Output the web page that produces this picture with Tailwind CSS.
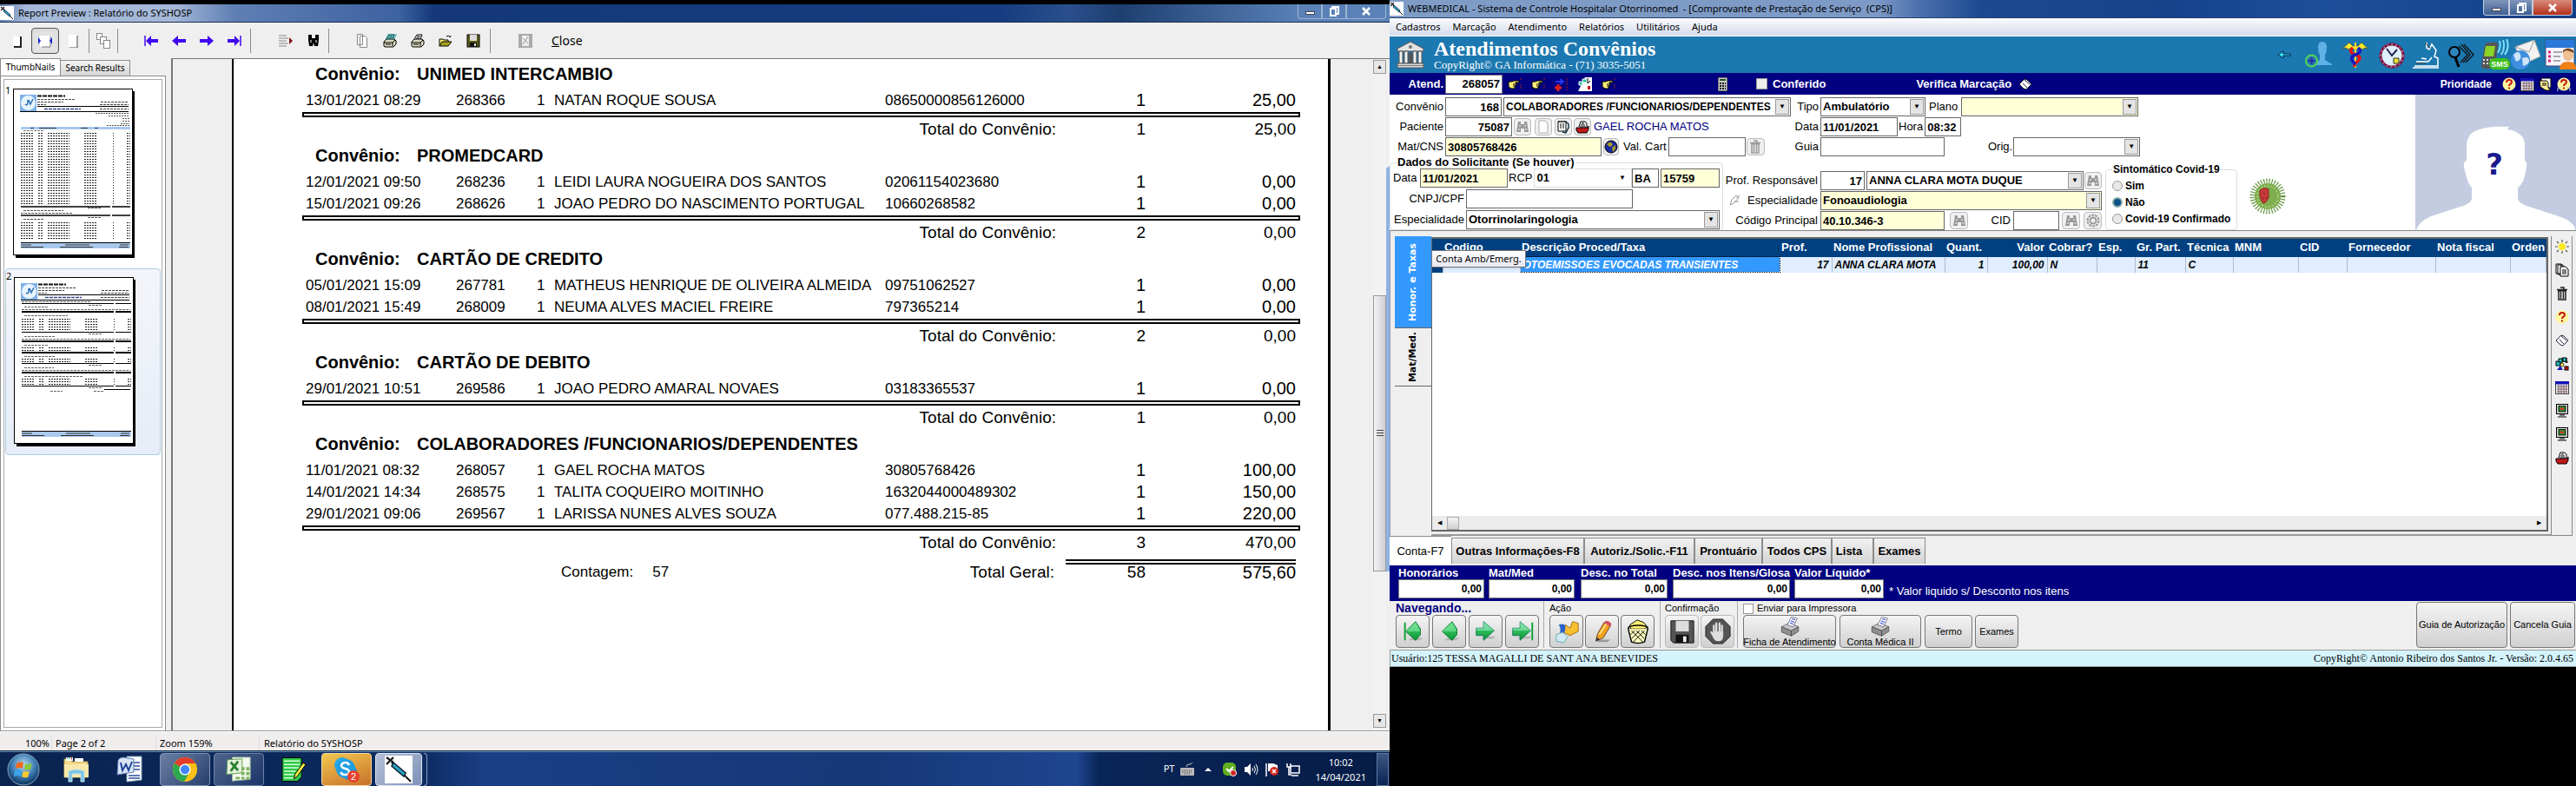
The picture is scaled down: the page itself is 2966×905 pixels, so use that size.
<!DOCTYPE html>
<html lang="pt-BR">
<head>
<meta charset="utf-8">
<title>SYSHOSP / WEBMEDICAL</title>
<script src="https://cdn.jsdelivr.net/npm/@tailwindcss/browser@4"></script>
</head>
<body class="bg-black font-['Liberation_Sans',Arial,sans-serif] text-black">
<svg width="0" height="0" class="absolute" aria-hidden="true">
  <defs>
    <linearGradient id="gGreen" x1="0" y1="0" x2="0" y2="1"><stop offset="0" stop-color="#5be08a"/><stop offset="1" stop-color="#05952d"/></linearGradient>
    <radialGradient id="gOrb" cx=".5" cy=".35" r=".6"><stop offset="0" stop-color="#b9dcf2"/><stop offset=".6" stop-color="#3f7fb4"/><stop offset="1" stop-color="#133d6c"/></radialGradient>
    <pattern id="rowsA" width="126" height="3" patternUnits="userSpaceOnUse"><path d="M0 1.500H15M20 1.500H26M31 1.500H56M73 1.500H88M106 1.500H107M122 1.500H126" stroke="#222" stroke-width="1" stroke-dasharray="2 1"/></pattern>
    <symbol id="syringe" viewBox="0 0 16 16"><rect width="16" height="16" fill="#fff"/><path d="M1 1l4 3M1 5l4-4M4 4l8 8" stroke="#222" stroke-width="1.2"/><path d="M5 4l7 6-1 2-7-6z" fill="#2aa7c9" stroke="#123" stroke-width=".8"/><path d="M12 12l3 3" stroke="#111"/></symbol>
    <symbol id="bino" viewBox="0 0 16 16"><path d="M3 2h3v3h4V2h3l2 12h-5v-4H6v4H1z" fill="currentColor"/><path d="M5 6v2M11 6v2M4 10v2M12 10v2" stroke="#fff"/></symbol>
    <symbol id="printer" viewBox="0 0 16 16"><path d="M4 6l3-5h6l-2 5" fill="#fff" stroke="#000"/><path d="M1 9l3-3h9l2 2v4l-3 3H2l-1-1z" fill="#d8d8c0" stroke="#000"/><path d="M1 10h10l3-3M11 10v4M3 12h6M7 3h4M6 5h4" stroke="#000" fill="none"/></symbol>
    <symbol id="printred" viewBox="0 0 16 16"><path d="M4 8l2-6h5l2 2v5" fill="#fff" stroke="#000"/><path d="M1 9h13l1-2v4l-2 4H3l-2-3z" fill="#c01818" stroke="#000"/><path d="M7 4h3M6 6h5M5 8h7" stroke="#000"/></symbol>
    <symbol id="help" viewBox="0 0 16 16"><circle cx="8" cy="8" r="7.5" fill="#fff59a"/><path d="M5 6q0-3 3-3t3 2.500q0 1.500-2 2.500-1 .8-1 2" stroke="#c01818" stroke-width="2" fill="none"/><rect x="7" y="11.500" width="2" height="2" fill="#c01818"/></symbol>
    <symbol id="cal" viewBox="0 0 16 16"><rect x=".5" y="1.500" width="15" height="14" fill="#eee" stroke="#444"/><rect y="1" width="16" height="3.500" fill="#1414b4"/><path d="M2 7h12M2 10h12M2 13h12M4 5v10M7 5v10M10 5v10M13 5v10" stroke="#7a5a66"/></symbol>
    <symbol id="book" viewBox="0 0 16 16"><path d="M1 8l6-6 3 1 5 5-6 6-3-1z" fill="#fff" stroke="currentColor"/><path d="M5 7l5 5M7 3l6 5" stroke="currentColor" fill="none"/></symbol>
    <symbol id="hand" viewBox="0 0 16 16"><path d="M1 5h4l2-1h6v2H9v1h1v2H9v2H8v2H4L1 11z" fill="#ffee7a" stroke="#000"/><path d="M6 8h3M6 10h3" stroke="#000"/><path d="M15 1v3M15 8v5" stroke="#a02020" stroke-dasharray="2 1"/></symbol>
    <symbol id="pc" viewBox="0 0 16 16"><rect x="1.500" y=".5" width="13" height="11" fill="#ddd" stroke="#000"/><rect x="4" y="2.500" width="8" height="6.500" fill="#2a8a2a" stroke="#000" stroke-width=".8"/><rect x="6" y="4.500" width="4" height="2.500" fill="#d33"/><path d="M5 13h6M3 15h10" stroke="#000"/></symbol>
    <symbol id="trash" viewBox="0 0 16 16"><path d="M6 1h4v2M2 3.500h12M3 5h10M4 5v10h8V5M6.500 6v8M9.500 6v8" stroke="currentColor" stroke-width="1.500" fill="none"/></symbol>
    <symbol id="docs" viewBox="0 0 16 16"><path d="M1 1h6v11H1zM3 2h6v11H3z" fill="#fff" stroke="#000"/><path d="M6 4h6l3 3v8H6z" fill="#fff" stroke="#000"/><path d="M8 8h5M8 10h5M8 12h5" stroke="#000"/></symbol>
    <symbol id="shapes" viewBox="0 0 16 16"><path d="M1 5h5v5H1z" fill="#29c4c4" stroke="#000"/><path d="M4 2h5v4H4zM8 1h5v4H8z" fill="#29c4c4" stroke="#000"/><path d="M13 1v6l2-2M13 7l-2-2" stroke="#000" fill="none"/><circle cx="8" cy="9" r="2" fill="#fe5" stroke="#000" stroke-width=".7"/><path d="M2 15l4-5 3 5z" fill="#1616b0"/><rect x="11" y="11" width="4" height="4" fill="#c11" stroke="#000"/></symbol>
    <symbol id="bigprint" viewBox="0 0 32 32"><path d="M3 17l12-6 14 6-11 6z" fill="#c8c8c8" stroke="#555"/><path d="M3 17v8l15 6v-8zM29 17v7l-11 7v-8z" fill="#8f8f8f" stroke="#444"/><path d="M12 14l6-12 9 2-6 13z" fill="#fff" stroke="#557"/><path d="M17 8l6 2M16 11l5 2M19 5l5 1" stroke="#3344cc" stroke-width="1.500"/></symbol>
    <symbol id="navprev" viewBox="0 0 32 32"><path d="M14 24h14l-4 3H10z" fill="#999" opacity=".6"/><path d="M7 16L19 4l6 9v7l-6 7z" fill="url(#gGreen)" stroke="#07702a"/><path d="M7 16h18L19 5z" fill="#8cf0a8" opacity=".5"/></symbol>
    <symbol id="navnext" viewBox="0 0 32 32"><path d="M10 25h14l4-3H12z" fill="#999" opacity=".6"/><path d="M4 12h9V4l13 11-13 12v-6H4z" fill="url(#gGreen)" stroke="#0b7a55"/><path d="M4 12h9V4l13 11H4z" fill="#a6efcf" opacity=".5"/></symbol>
    <symbol id="thumbhead" viewBox="0 0 136 38"><rect x="8" y="7" width="19" height="19" fill="#7fb0e8"/><circle cx="17.500" cy="16.500" r="8.500" fill="#e8f4fb"/><path d="M14 18q2 2 3-1v-4M18 13l2 5 3-6" stroke="#2b6fb8" stroke-width="1.500" fill="none"/><path d="M28 8.500h32" stroke="#111" stroke-width="2" stroke-dasharray="5 1"/><path d="M28 12.500h43M28 15.500h30M28 18.500h10M101 15.500h32M100 18.500h33M100 23.500h33" stroke="#444" stroke-dasharray="3 1"/><path d="M28 20.500h105M8 26.500h125" stroke="#000"/><path d="M36 23.500h42" stroke="#334a90" stroke-width="1.500" stroke-dasharray="4 1"/></symbol>
  </defs>
</svg>

<div class="grid min-h-screen grid-cols-[800fr_683fr]">

<!-- Report preview window with taskbar -->
<section class="flex min-h-screen flex-col bg-[#efefef] pt-[5px] shadow-[inset_0_5px_0_#000]">
  <header class="flex h-[21px] items-center border-b border-[#1d2f50] bg-[linear-gradient(90deg,#6683b4_0,#a4b8d8_30px,#a4b8d8_200px,#5f7fb4_270px,#3d62a0_460px,#14387a_500px,#153c80_1150px,#2a4f8c_1230px,#1d3f70_1290px,#5a82b8_1500px)] font-['Noto_Sans',sans-serif] text-[11px]">
    <svg class="h-4 w-4"><use href="#syringe"/></svg>
    <h1 class="ml-[5px] flex-1">Report Preview : Relatório do SYSHOSP</h1>
    <div class="mr-1 flex h-full w-[102px] pb-[3px] text-white [&_button]:flex [&_button]:items-center [&_button]:justify-center [&_button]:border [&_button]:border-t-0 [&_button]:border-[#9fb4d2]">
      <button aria-label="Minimizar" class="w-7 rounded-bl"><span class="mt-1 h-1 w-[11px] border border-[#445] bg-white"></span></button>
      <button aria-label="Restaurar" class="w-7 border-l-0"><svg class="h-3 w-3" viewBox="0 0 12 12" fill="none"><path d="M4 3V1h7v8H9" stroke="#fff" stroke-width="2"/><rect x="2" y="3" width="6" height="8" stroke="#fff" stroke-width="2"/></svg></button>
      <button aria-label="Fechar" class="flex-1 rounded-br border-l-0"><svg class="h-2.5 w-2.5" viewBox="0 0 10 10"><path d="M1 1l8 8M9 1L1 9" stroke="#fff" stroke-width="2.500"/></svg></button>
    </div>
  </header>

  <nav class="flex h-[41px] items-center pl-1 [&_button]:flex [&_button]:h-[30px] [&_button]:w-8 [&_button]:items-center [&_button]:justify-center [&>i]:h-7 [&>i]:w-px [&>i]:bg-[#8c8c8c]">
    <button aria-label="Página inteira"><svg class="h-4 w-4" viewBox="0 0 16 16"><rect x="3" y="3" width="8" height="11" fill="#fff"/><path d="M12 3v12H4" stroke="#222" stroke-width="2" fill="none"/></svg></button>
    <button aria-label="Largura da página" class="rounded border border-[#555] bg-[#e2e2e2] shadow-inner"><svg class="h-4 w-4" viewBox="0 0 16 16"><rect x="2" y="2" width="12" height="13" fill="#fff"/><path d="M14 3v12H4" stroke="#777" fill="none"/><path d="M0 4l3 4-3 4zM16 4l-3 4 3 4z" fill="#1428d8"/></svg></button>
    <button aria-label="100%"><svg class="h-4 w-4" viewBox="0 0 16 16"><rect x="3" y="1" width="9" height="14" fill="#fff"/><path d="M13 2v14H4" stroke="#555" fill="none"/></svg></button>
    <i class="ml-0.5"></i>
    <button aria-label="Várias páginas"><svg class="h-[18px] w-[18px]" viewBox="0 0 18 18" fill="#fff" stroke="#888"><rect x="1.500" y=".5" width="6" height="7"/><rect x="5.500" y="4.500" width="7" height="8"/><rect x="9.500" y="8.500" width="7" height="9"/></svg></button>
    <i></i>
    <button aria-label="Primeira página" class="ml-[22px]"><svg class="h-4 w-4" viewBox="0 0 16 16"><path d="M1 2v12" stroke="#4008f0" stroke-width="1.500"/><path d="M2 8l6-6v4h8v4H8v4z" fill="#4008f0"/></svg></button>
    <button aria-label="Página anterior"><svg class="h-4 w-4" viewBox="0 0 16 16"><path d="M0 8l7-6v4h9v4H7v4z" fill="#4008f0"/></svg></button>
    <button aria-label="Próxima página"><svg class="h-4 w-4" viewBox="0 0 16 16"><path d="M16 8L9 2v4H0v4h9v4z" fill="#4008f0"/></svg></button>
    <button aria-label="Última página"><svg class="h-4 w-4" viewBox="0 0 16 16"><path d="M15 2v12" stroke="#4008f0" stroke-width="1.500"/><path d="M14 8L8 2v4H0v4h8v4z" fill="#4008f0"/></svg></button>
    <i class="ml-0.5"></i>
    <button aria-label="Ir para página" class="ml-6"><svg class="h-4 w-4" viewBox="0 0 16 16"><path d="M0 2h9M0 5h11M0 8h9M0 11h11M0 14h9" stroke="#888"/><path d="M12 4l4 4-4 4z" fill="#801010"/></svg></button>
    <button aria-label="Procurar"><svg class="h-4 w-4" viewBox="0 0 16 16"><path d="M2 1h4v4h4V1h4v6l-1 7H9l-1-4-1 4H3L2 7z" fill="#000"/><path d="M5 7v3M11 7v3" stroke="#fff"/></svg></button>
    <i class="ml-px"></i>
    <button aria-label="Copiar" class="ml-[22px]"><svg class="h-4 w-4" viewBox="0 0 16 16" fill="#fff" stroke="#888"><path d="M2.500.5h6v12h-6zM5.500 2.500h6l2 2v11h-8z"/></svg></button>
    <button aria-label="Configurar impressora"><svg class="h-4 w-4"><use href="#printer"/><path d="M5 1h11M4 3h11M3 5h11" stroke="#10a0a0"/></svg></button>
    <button aria-label="Imprimir"><svg class="h-4 w-4"><use href="#printer"/></svg></button>
    <button aria-label="Abrir"><svg class="h-4 w-4" viewBox="0 0 16 16"><path d="M1 14V6h4l1 1h5v2" fill="#ffef70" stroke="#000"/><path d="M1 14l3-5h11l-4 5z" fill="#a8a020" stroke="#000"/><path d="M9 3q3-2 4 1l1-2" stroke="#000" fill="none"/></svg></button>
    <button aria-label="Salvar"><svg class="h-4 w-4" viewBox="0 0 16 16"><rect x="1" y="1" width="14" height="14" fill="#5c5c14" stroke="#000"/><rect x="4" y="1" width="8" height="7" fill="#ddd"/><rect x="4" y="10" width="8" height="5" fill="#111"/><rect x="9" y="11" width="2" height="3" fill="#ddd"/></svg></button>
    <i class="ml-[3px]"></i>
    <button aria-label="Cancelar" class="ml-6"><svg class="h-4 w-4" viewBox="0 0 16 16"><rect width="16" height="16" fill="#aaa"/><rect x="4" y="2" width="8" height="12" fill="#eee"/><path d="M5 12l6-9M5 5l6 6" stroke="#999"/></svg></button>
    <button class="ml-[14px] font-['Noto_Sans',sans-serif] text-sm !w-auto"><span><u>C</u>lose</span></button>
  </nav>

  <div class="flex flex-1">
    <aside class="flex w-[191px] flex-col font-['Noto_Sans',sans-serif] text-[11px]">
      <div class="flex items-end" role="tablist">
        <button role="tab" aria-selected="true" class="h-5 w-[70px] border border-b-0 border-[#8c8c8c] bg-white text-[10px]">ThumbNails</button>
        <button role="tab" aria-selected="false" class="h-[18px] w-20 border border-b-0 border-l-0 border-[#8c8c8c] bg-[linear-gradient(#f3f3f3,#d6d6d6)] text-[10px]">Search Results</button>
      </div>
      <div class="flex-1 border border-[#8c8c8c] bg-white p-[3px]">
        <div class="h-full border border-[#aaa] px-px pt-1">
          <figure class="flex items-start pb-3">
            <figcaption class="w-[9px] leading-4">1</figcaption>
            <svg class="mt-[6px] h-[195px] w-[142px] -mr-2" viewBox="0 0 142 195"><rect x="3" y="3" width="137" height="192" fill="#000"/><rect x=".5" y=".5" width="137" height="191" fill="#fff" stroke="#000"/><use href="#thumbhead" width="136" height="38"/>
              <path d="M95 28.500h38M110 31.500h23M126 34.500h8M126 37.500h8M124 40.500h10M108 42.500h26" stroke="#555" stroke-dasharray="2 1"/>
              <rect x="9" y="44" width="126" height="3" fill="#a8c8ec"/><path d="M20 45.500h4M30 45.500h20M78 45.500h8M94 45.500h4" stroke="#345"/>
              <path d="M12 48.500h24" stroke="#777" stroke-dasharray="3 1"/>
              <g transform="translate(9 50)"><rect width="126" height="85" fill="url(#rowsA)"/></g>
              <path d="M9 136h103M114 136h21M9 146h103M114 146h21" stroke="#000" stroke-width="1.500"/><path d="M12 140.500h46M9 143.500h60M86 137.500h16M86 148.500h16M12 150.500h24" stroke="#555" stroke-dasharray="3 1"/>
              <g transform="translate(9 153)"><rect width="126" height="21" fill="url(#rowsA)"/></g>
              <path d="M9 177.500h126" stroke="#000"/><rect x="9" y="178" width="126" height="6" fill="#a8c8ec"/><path d="M9 180h12M60 180h28M123 180h10M9 182.500h26M54 182.500h38M122 182.500h11" stroke="#333"/></svg>
          </figure>
          <figure class="flex items-start rounded-sm border border-[#a9cbe2] bg-[linear-gradient(#f4f5fa,#e6edf7)] pb-2">
            <figcaption class="w-[9px] leading-4">2</figcaption>
            <svg class="mt-[9px] h-[196px] w-[142px]" viewBox="0 0 142 196"><rect x="3" y="3" width="137" height="192" fill="#000"/><rect x=".5" y=".5" width="137" height="191" fill="#fff" stroke="#000"/><use href="#thumbhead" width="136" height="38"/>
              <path d="M9 30.500h106M117 30.500h18M9 63.500h106M117 63.500h18M9 99.500h106M117 99.500h18M9 125.500h106M117 125.500h18" stroke="#000"/>
              <path d="M9 40h106M117 40h18M9 74h106M117 74h18M9 87h106M117 87h18M9 110h106M117 110h18" stroke="#000" stroke-width="2"/>
              <path d="M9 28.500h80M12 34.500h28M9 37.500h125M12 44.500h50M12 68.500h36M9 71.500h125M12 78.500h28M12 91.500h36M12 104.500h34M9 107.500h125M12 114.500h68M86 32.500h16M86 65.500h16M86 101.500h16M86 127.500h16M42 131.500h14M92 131.500h12" stroke="#666" stroke-dasharray="3 1"/>
              <g transform="translate(9 47)"><rect width="126" height="15" fill="url(#rowsA)"/></g><g transform="translate(9 80)"><rect width="126" height="6" fill="url(#rowsA)"/></g><g transform="translate(9 93)"><rect width="126" height="6" fill="url(#rowsA)"/></g><g transform="translate(9 116)"><rect width="126" height="9" fill="url(#rowsA)"/></g>
              <path d="M104 129.500h30M9 177.500h126" stroke="#000"/><rect x="9" y="178" width="126" height="6" fill="#a8c8ec"/><path d="M9 180h12M60 180h28M123 180h10M9 182.500h26M54 182.500h38M122 182.500h11" stroke="#333"/></svg>
          </figure>
        </div>
      </div>
    </aside>

    <div class="ml-1.5 flex flex-1 border-l-2 border-t border-[#777]">
      <div class="ml-[68px] flex-1 border-l-2 border-r-[3px] border-black bg-white pl-[79px] pr-8 leading-[25px]">
        <table class="w-full table-fixed border-collapse text-[17px] [&_td]:p-0 [&_th]:p-0 [&_td]:whitespace-nowrap [&_td:nth-child(n+6)]:text-[20px] [&_.h]:text-left [&_.h]:text-[20px] [&_.h]:leading-[35px] [&_.h_span]:inline-block [&_.h_span]:w-[117px] [&_tr>td:nth-last-child(-n+2)]:text-right [&_.t]:leading-[26px] [&_.t_td]:text-[19px]">
          <colgroup><col class="w-[177px]"><col class="w-[93px]"><col class="w-5"><col><col class="w-[200px]"><col class="w-[100px]"><col class="w-[178px]"></colgroup>
          <tbody>
            <tr><th colspan="7" class="h"><span class="ml-[15px]">Convênio:</span>UNIMED INTERCAMBIO</th></tr>
            <tr><td class="pl-1!">13/01/2021 08:29</td><td>268366</td><td>1</td><td>NATAN ROQUE SOUSA</td><td>08650000856126000</td><td>1</td><td class="pr-[5px]!">25,00</td></tr>
            <tr><th colspan="7"><div class="mb-px mt-px h-1.5 border-2"></div></th></tr>
            <tr class="t"><td colspan="5" class="pr-[3px]! text-right">Total do Convênio:</td><td>1</td><td class="pr-[5px]!">25,00</td></tr>
          </tbody>
          <tbody>
            <tr><th colspan="7" class="h"><span class="ml-[15px]">Convênio:</span>PROMEDCARD</th></tr>
            <tr><td class="pl-1!">12/01/2021 09:50</td><td>268236</td><td>1</td><td>LEIDI LAURA NOGUEIRA DOS SANTOS</td><td>02061154023680</td><td>1</td><td class="pr-[5px]!">0,00</td></tr>
            <tr><td class="pl-1!">15/01/2021 09:26</td><td>268626</td><td>1</td><td>JOAO PEDRO DO NASCIMENTO PORTUGAL</td><td>10660268582</td><td>1</td><td class="pr-[5px]!">0,00</td></tr>
            <tr><th colspan="7"><div class="mb-px mt-px h-1.5 border-2"></div></th></tr>
            <tr class="t"><td colspan="5" class="pr-[3px]! text-right">Total do Convênio:</td><td>2</td><td class="pr-[5px]!">0,00</td></tr>
          </tbody>
          <tbody>
            <tr><th colspan="7" class="h"><span class="ml-[15px]">Convênio:</span>CARTÃO DE CREDITO</th></tr>
            <tr><td class="pl-1!">05/01/2021 15:09</td><td>267781</td><td>1</td><td>MATHEUS HENRIQUE DE OLIVEIRA ALMEIDA</td><td>09751062527</td><td>1</td><td class="pr-[5px]!">0,00</td></tr>
            <tr><td class="pl-1!">08/01/2021 15:49</td><td>268009</td><td>1</td><td>NEUMA ALVES MACIEL FREIRE</td><td>797365214</td><td>1</td><td class="pr-[5px]!">0,00</td></tr>
            <tr><th colspan="7"><div class="mb-px mt-px h-1.5 border-2"></div></th></tr>
            <tr class="t"><td colspan="5" class="pr-[3px]! text-right">Total do Convênio:</td><td>2</td><td class="pr-[5px]!">0,00</td></tr>
          </tbody>
          <tbody>
            <tr><th colspan="7" class="h"><span class="ml-[15px]">Convênio:</span>CARTÃO DE DEBITO</th></tr>
            <tr><td class="pl-1!">29/01/2021 10:51</td><td>269586</td><td>1</td><td>JOAO PEDRO AMARAL NOVAES</td><td>03183365537</td><td>1</td><td class="pr-[5px]!">0,00</td></tr>
            <tr><th colspan="7"><div class="mb-px mt-px h-1.5 border-2"></div></th></tr>
            <tr class="t"><td colspan="5" class="pr-[3px]! text-right">Total do Convênio:</td><td>1</td><td class="pr-[5px]!">0,00</td></tr>
          </tbody>
          <tbody>
            <tr><th colspan="7" class="h"><span class="ml-[15px]">Convênio:</span>COLABORADORES /FUNCIONARIOS/DEPENDENTES</th></tr>
            <tr><td class="pl-1!">11/01/2021 08:32</td><td>268057</td><td>1</td><td>GAEL ROCHA MATOS</td><td>30805768426</td><td>1</td><td class="pr-[5px]!">100,00</td></tr>
            <tr><td class="pl-1!">14/01/2021 14:34</td><td>268575</td><td>1</td><td>TALITA COQUEIRO MOITINHO</td><td>1632044000489302</td><td>1</td><td class="pr-[5px]!">150,00</td></tr>
            <tr><td class="pl-1!">29/01/2021 09:06</td><td>269567</td><td>1</td><td>LARISSA NUNES ALVES SOUZA</td><td>077.488.215-85</td><td>1</td><td class="pr-[5px]!">220,00</td></tr>
            <tr><th colspan="7"><div class="mb-px mt-px h-1.5 border-2"></div></th></tr>
            <tr class="t"><td colspan="5" class="pr-[3px]! text-right">Total do Convênio:</td><td>3</td><td class="pr-[5px]!">470,00</td></tr>
          </tbody>
          <tfoot>
            <tr><th colspan="5"></th><th colspan="2" class="pl-2! pr-[5px]!"><div class="mt-1.5 h-1.5 border-y-2"></div></th></tr>
            <tr class="leading-[18px]"><td colspan="3"></td><td class="pl-2! text-[17px]">Contagem:<span class="ml-[22px]">57</span></td><td class="pr-[5px]! text-right text-[19px]">Total Geral:</td><td class="text-[19px]">58</td><td class="pr-[5px]! text-[20px]">575,60</td></tr>
          </tfoot>
        </table>
      </div>
      <div class="ml-[49px] mt-px flex w-[15px] flex-col bg-[#f2f2f2] pb-1">
        <button aria-label="Rolar para cima" class="h-4 w-[15px] border border-[#999] bg-[#e6e6e6] text-[7px] leading-3">▲</button>
        <div class="flex-[256]"></div>
        <div class="flex flex-[317] flex-col items-center justify-center gap-0.5 border border-[#999] bg-[linear-gradient(90deg,#f4f4f4,#cfcfd4)]"><i class="h-px w-2 bg-[#444]"></i><i class="h-px w-2 bg-[#444]"></i><i class="h-px w-2 bg-[#444]"></i></div>
        <div class="flex-[165]"></div>
        <button aria-label="Rolar para baixo" class="h-4 w-[15px] border border-[#999] bg-[#e6e6e6] text-[7px] leading-3">▼</button>
      </div>
      <div class="mb-[184px] mt-[124px] w-1 rounded-tl bg-[#8fb4e4]"></div>
    </div>
  </div>

  <footer class="flex h-[23px] items-end border-t border-white bg-[#f0eded] font-['Noto_Sans',sans-serif] text-[11px] leading-[19px] shadow-[0_-1px_0_#999]">
    <span class="w-[60px] border-r border-[#ddd] pr-0.5 text-right">100%</span><span class="w-[120px] border-r border-[#ddd] pl-1">Page 2 of 2</span><span class="w-[119px] border-r border-[#ddd] pl-1">Zoom 159%</span><span class="pl-[5px]">Relatório do SYSHOSP</span>
  </footer>

  <div class="flex h-10 items-center border-t border-[#6f8fb8] bg-[linear-gradient(90deg,#0a2350_0,#0c2a60_480px,#1b3f86_560px,#153878_1000px,#1e4590_1240px,#0a2558_1265px,#061c46)] text-white shadow-[0_-1px_0_#0b2a3a]">
    <button aria-label="Iniciar" class="ml-2"><svg class="h-[38px] w-[38px]" viewBox="0 0 38 38"><circle cx="19" cy="19" r="18" fill="url(#gOrb)" stroke="#8ab"/><path d="M11 12q4-3 8-1l-1 7q-4-2-8 0z" fill="#f06a20"/><path d="M21 12q4 2 8 0l-2 7q-4 1-7 0z" fill="#8cc63c"/><path d="M9 20q4-2 8 0l-1 7q-4-2-8 0z" fill="#3ba4e8"/><path d="M19 21q4 1 7 0l-2 7q-4 1-7-1z" fill="#fcc92a"/></svg></button>
    <button aria-label="Explorador" class="ml-[26px]"><svg class="h-8 w-8" viewBox="0 0 32 32"><path d="M2 4h7l2 3h18v18H2z" fill="#f3d98a" stroke="#b89a4a"/><path d="M4 2h8v4H4zM14 3h10v4H14z" fill="#fff"/><path d="M5 3h4" stroke="#2a8"/><path d="M10 3h1" stroke="#c33" stroke-width="3"/><path d="M2 10h28v15H2z" fill="#f9e8aa"/><path d="M7 30V18q9-4 18 0v12h-4v-9h-10v9z" fill="#7cc4e4" stroke="#bfe4f4"/></svg></button>
    <button aria-label="Word" class="ml-[30px]"><svg class="h-8 w-8" viewBox="0 0 32 32"><path d="M12 1h17v27l-17 2z" fill="#fff" stroke="#8ab"/><path d="M18 8h9M20 12h7M20 16h7M14 23h13M14 26h13" stroke="#2b4f9c" stroke-width="1.500"/><path d="M2 5q2-3 6-3l12 2v15L1 22z" fill="#d8e4f4" stroke="#5a7ab8"/><path d="M5 8l2 9 4-7 3 7 4-10" stroke="#20459c" stroke-width="2" fill="none"/></svg></button>
    <button aria-label="Chrome" class="ml-[18px] flex h-[38px] w-[58px] items-center justify-center rounded-sm border border-[#7f94b8] bg-[linear-gradient(135deg,#6c80a4,#273f6e)]"><svg class="h-[30px] w-[30px]" viewBox="0 0 32 32"><circle cx="16" cy="16" r="15" fill="#fbc116"/><path d="M16 16L3 8.500A15 15 0 0 1 29 8.500H16z" fill="#e33b2e"/><path d="M3 8.500A15 15 0 0 0 15 31l7-12z" fill="#2da94f"/><path d="M29 8.500H16l6 11z" fill="#fbc116"/><circle cx="16" cy="16" r="7" fill="#fff"/><circle cx="16" cy="16" r="5.500" fill="#4285f4"/></svg></button>
    <button aria-label="Excel" class="ml-1 flex h-[38px] w-[58px] items-center justify-center rounded-sm border border-[#6f84a8] bg-[linear-gradient(135deg,#50658c,#1b3568)]"><svg class="h-[30px] w-[30px]" viewBox="0 0 32 32"><path d="M8 1h22v27l-22 2z" fill="#f4faf0" stroke="#9b9"/><path d="M19 13h4v4h-4zM25 13h4v4h-4zM19 19h4v4h-4zM25 19h4v4h-4zM12 25h5v3h-5zM19 25h4v3h-4zM25 25h4v3h-4z" fill="#7eb25c"/><path d="M2 4l18-1v17l-19 2z" fill="#e4f2dc" stroke="#5a9a4a"/><path d="M6 7l9 10M15 6L6 18" stroke="#2a8030" stroke-width="3"/></svg></button>
    <button aria-label="Bloco de notas" class="ml-5"><svg class="h-[30px] w-[29px]" viewBox="0 0 30 30"><path d="M1 1h23v23l-5 5H1z" fill="#2fc84a" stroke="#000"/><path d="M3 5h19M3 9h19M3 13h18M3 17h14M3 21h12M3 25h12" stroke="#d8ffd8" stroke-width="1.500"/><path d="M26 7l3 2-10 14-4 3 1-5z" fill="#fe4" stroke="#000"/></svg></button>
    <button aria-label="Skype" class="ml-[17px] flex h-[38px] w-[58px] items-center justify-center rounded-sm border border-[#f4d8a8] bg-[linear-gradient(160deg,#f2c84e,#c8702a)]"><svg class="h-8 w-8" viewBox="0 0 32 32"><circle cx="11" cy="11" r="9" fill="#2aa8e8"/><circle cx="19" cy="19" r="9" fill="#1a90d8"/><circle cx="15" cy="15" r="11" fill="#1f9fe2"/><path d="M19 11q-1-3-4.500-3T10 11q0 3 4.500 4t4.500 4q0 3-4.500 3T9.500 19" stroke="#fff" stroke-width="2.500" fill="none"/><circle cx="24" cy="24" r="7" fill="#e8402c"/><text x="24" y="28" text-anchor="middle" font-size="11" font-family="Liberation Sans" fill="#fff">2</text></svg></button>
    <button aria-label="SYSHOSP" class="ml-1 flex h-[38px] w-[54px] items-center justify-center rounded-sm border border-[#dfe6f0] bg-[linear-gradient(135deg,#b4c0d8,#7f93b8)]"><svg class="h-8 w-8"><use href="#syringe"/></svg></button>
    <i class="ml-0.5 h-[38px] w-1 rounded-r border border-l-0 border-[#8c9dbd]"></i>
    <div class="ml-auto flex items-center font-['Noto_Sans',sans-serif] text-[11px]">
      <span>PT</span>
      <svg class="ml-[7px] h-4 w-4" viewBox="0 0 16 16"><path d="M7 5q0-3 3-3t4-2" stroke="#ccc" fill="none"/><rect y="6" width="16" height="9" rx="1" fill="#bbb"/><path d="M2 9h12M2 11h12M4 13h8" stroke="#444" stroke-dasharray="1 1"/></svg>
      <svg class="ml-3 h-1.5 w-2" viewBox="0 0 8 6"><path d="M4 1l4 4H0z" fill="#fff"/></svg>
      <svg class="ml-[13px] h-4 w-4" viewBox="0 0 16 16"><rect width="15" height="15" rx="5" fill="#5fae20"/><path d="M4 7l3 3 5-5" stroke="#fff" stroke-width="2" fill="none"/><circle cx="12" cy="12" r="3.500" fill="#d02020" stroke="#fff"/></svg>
      <svg class="ml-[9px] h-4 w-4" viewBox="0 0 16 16"><path d="M0 5h3l4-4v14l-4-4H0z" fill="#fff"/><path d="M9 6q1 2 0 4M11 4q3 4 0 8M13 2q4 6 0 12" stroke="#fff" fill="none"/></svg>
      <svg class="ml-2 h-4 w-4" viewBox="0 0 16 16"><path d="M1 1v15" stroke="#fff" stroke-width="1.500"/><path d="M3 1h6l5 2v7H3z" fill="#fff"/><circle cx="10" cy="10" r="5" fill="#d42a20"/><path d="M8 8l4 4M12 8l-4 4" stroke="#fff" stroke-width="1.500"/></svg>
      <svg class="ml-2 h-4 w-4" viewBox="0 0 16 16" fill="none"><path d="M1 1v4h4V1M3 5v9h3" stroke="#fff" stroke-width="1.500"/><rect x="5" y="4" width="10" height="8" stroke="#fff" stroke-width="1.500"/><path d="M6 15h8" stroke="#fff" stroke-width="1.500"/></svg>
      <time class="ml-[17px] mr-3 block text-center leading-[17px]">10:02<br>14/04/2021</time>
      <button aria-label="Mostrar área de trabalho" class="mr-px h-[38px] w-3.5 border border-[#60779f] bg-[linear-gradient(#3c5784,#0a2454)]"></button>
    </div>
  </div>
</section>

<!-- Webmedical window -->
<section class="self-start bg-[#efefef] text-[13px]">
  <header class="flex h-[21px] items-center border-b border-[#26406e] bg-[linear-gradient(90deg,#7f9cc6_0,#7d9ac6_560px,#4b70ac_610px,#1c4a92_680px,#15438c_900px,#1e4f9a_1080px,#123f88)] font-['Noto_Sans',sans-serif] text-[11px]">
    <svg class="h-4 w-4"><use href="#syringe"/></svg>
    <h1 class="ml-[5px] flex-1 whitespace-pre">WEBMEDICAL - Sistema de Controle Hospitalar Otorrinomed  - [Comprovante de Prestação de Serviço  (CPS)]</h1>
    <div class="mr-1 flex h-full w-[103px] pb-[2px] [&_button]:flex [&_button]:items-center [&_button]:justify-center [&_button]:border [&_button]:border-t-0 [&_button]:border-[#c4cfe0]">
      <button aria-label="Minimizar" class="w-[30px] rounded-bl bg-[linear-gradient(#7f96bb,#3f5f92)]"><span class="mt-1 h-1 w-[11px] border border-[#445] bg-white"></span></button>
      <button aria-label="Restaurar" class="w-[27px] border-l-0 bg-[linear-gradient(#7f96bb,#3f5f92)]"><svg class="h-3 w-3" viewBox="0 0 12 12" fill="none"><path d="M4 3V1h7v8H9" stroke="#fff" stroke-width="2"/><rect x="2" y="3" width="6" height="8" stroke="#fff" stroke-width="2"/></svg></button>
      <button aria-label="Fechar" class="flex-1 rounded-br border-l-0 bg-[linear-gradient(#d98a7c,#b3301c)]"><svg class="h-2.5 w-2.5" viewBox="0 0 10 10"><path d="M1 1l8 8M9 1L1 9" stroke="#fff" stroke-width="2.500"/></svg></button>
    </div>
  </header>
  <nav class="flex h-[21px] items-center gap-3.5 border-b border-white bg-[linear-gradient(#fafbfd,#d5dbec)] pl-[7px] font-['Noto_Sans',sans-serif] text-[11px]">
    <a href="#">Cadastros</a><a href="#">Marcação</a><a href="#">Atendimento</a><a href="#">Relatórios</a><a href="#">Utilitários</a><a href="#">Ajuda</a>
  </nav>
  <div class="flex h-[42px] items-center bg-[#1c78b0] text-white">
    <svg class="ml-2 h-8 w-8" viewBox="0 0 32 32"><path d="M16 1L1 9v3h30V9z" fill="#e4e4e4" stroke="#555"/><circle cx="16" cy="7" r="2" fill="#777"/><path d="M3 12h4v14H3zM9 12h4v14H9zM19 12h4v14h-4zM25 12h4v14h-4z" fill="#f2f2f2" stroke="#555"/><path d="M14 14h4v12h-4z" fill="#555"/><path d="M1 26h30v5H1z" fill="#ddd" stroke="#555"/><path d="M1 28.500h30" stroke="#777"/></svg>
    <div class="ml-[11px] flex-1 font-['Liberation_Serif',serif]"><h2 class="text-2xl leading-6 font-bold">Atendimentos Convênios</h2><p class="text-[13px] leading-3.5">CopyRight© GA Informática - (71) 3035-5051</p></div>
    <div class="flex items-center">
      <svg class="mr-4 h-3 w-4" viewBox="0 0 16 12"><path d="M1 6l6-4v3h8v2H7v3z" fill="#30e0f0" stroke="#003" stroke-width=".8"/></svg>
      <svg class="mr-2.5 h-8 w-8" viewBox="0 0 32 32"><path d="M15 8q0-7 5-7t5 7q0 5-2 8v6l8 5v1H12v-2l5-4v-6q-2-3-2-8z" fill="#5fb0e4"/><circle cx="7.500" cy="23" r="6.500" fill="#2a78b8" stroke="#50d850" stroke-width="2"/><path d="M7.500 19v8M3.500 23h8" stroke="#2430a0" stroke-width="2"/></svg>
      <svg class="mr-2.5 h-8 w-8" viewBox="0 0 32 32"><path d="M1 9l8-7 4 4h6l4-4 8 7-4-1-3 2-3-2-3 2h-4l-3-2-3 2-3-2z" fill="#ffe82a" stroke="#443" stroke-width=".7"/><path d="M16 2v29" stroke="#fd3" stroke-width="2"/><path d="M13 8q-6 5 3 8t2 8q-4 3-3 6" stroke="#e01818" stroke-width="3.500" fill="none"/><path d="M19 8q6 5-3 8t0 11" stroke="#1818c0" stroke-width="3.500" fill="none"/></svg>
      <svg class="mr-2 h-8 w-8" viewBox="0 0 32 32"><circle cx="16" cy="17" r="13" fill="#dff0f8" stroke="#7a1040" stroke-width="3"/><circle cx="16" cy="17" r="13" fill="none" stroke="#fff" stroke-width=".8" stroke-dasharray="2 3"/><path d="M10 9l6 8 6-7" stroke="#225" stroke-width="2" fill="none"/><path d="M18 20h6v6h-6z" fill="#e8e030" stroke="#333"/></svg>
      <svg class="mr-2 h-8 w-8" viewBox="0 0 32 32" fill="none"><path d="M16 2v6l3 2 3-6 5 7-2 7 4 2v9H2M0 31h30M4 24h14l4-5M10 20l6 1" stroke="#fff" stroke-width="1.500"/><path d="M14 2l6 6M3 26h12" stroke="#444"/></svg>
      <svg class="mr-1 h-8 w-8" viewBox="0 0 32 32"><path d="M13 6l10 10-8 9M16 4l10 12-8 9M19 4l11 12-9 9" stroke="#111" stroke-width="1.300" fill="none"/><circle cx="8" cy="13" r="6" fill="#2c84bc" stroke="#000" stroke-width="2"/><path d="M9 19l4 11" stroke="#000" stroke-width="3"/></svg>
      <svg class="h-9 w-9" viewBox="0 0 36 36"><path d="M3 30L7 7q1-3 5-3h7q3 0 3 3l-3 23q-1 4-5 4H7q-4 0-4-4z" fill="#555"/><path d="M8 8h11l-2 12H6z" fill="#8ad42a"/><path d="M5 24h10M5 28h9" stroke="#ddd" stroke-dasharray="2 2" stroke-width="2"/><path d="M24 2q2 8-2 14M28 1q3 9-2 17M32 0q4 9-2 18" stroke="#7fe0f8" stroke-width="2" fill="none"/><rect x="12" y="22" width="24" height="13" rx="6" fill="#3fc01c"/><text x="24" y="32" text-anchor="middle" font-size="9" font-weight="bold" font-family="Liberation Sans" fill="#fff">SMS</text></svg>
      <svg class="mr-1 h-9 w-9" viewBox="0 0 36 36"><path d="M6 9L28 1l7 19-20 9z" fill="#f2f2f2" stroke="#aaa"/><path d="M6 9l16 6 6-14" fill="none" stroke="#999"/><circle cx="12" cy="24" r="11" fill="#3f8fe0"/><path d="M4 18q6-6 8 0t-5 8zM14 22q7-3 8 2t-7 7z" fill="#cfe6fa"/></svg>
      <svg class="h-9 w-9" viewBox="0 0 36 36"><rect x="1" y="1" width="33" height="30" fill="#f4f4fa" stroke="#447"/><rect x="1" y="1" width="33" height="9" fill="#2a78d8"/><path d="M4 15h3M4 20h3M4 25h3" stroke="#d42a80" stroke-width="3"/><path d="M10 15h10M10 20h8M10 25h8" stroke="#aaa" stroke-width="2"/><circle cx="27" cy="19" r="6" fill="#f0c090"/><path d="M21 17q2-7 12-1v-3q-6-5-12 0z" fill="#7a4a1a"/><path d="M17 35q0-9 10-9t9 9z" fill="#f08018"/></svg>
    </div>
  </div>

  <div class="flex h-[25px] items-center bg-[#000080] font-bold text-white">
    <label for="atend" class="w-[62px] text-right">Atend.</label>
    <input id="atend" value="268057" class="ml-0.5 h-[22px] w-[66px] border border-[#777] bg-white px-0.5 text-right text-black">
    <div class="ml-1.5 flex gap-[11px] [&_svg]:h-4 [&_svg]:w-4"><svg><use href="#hand"/></svg><svg><use href="#hand"/></svg><svg viewBox="0 0 16 16"><path d="M1 5h8M6 2l4 3-4 3" stroke="#2233ee" stroke-width="2" fill="none"/><path d="M4 8v8M0 12h8" stroke="#e02020" stroke-width="3"/><path d="M14 1v14" stroke="#a02020" stroke-dasharray="2 1"/></svg><svg viewBox="0 0 16 16"><path d="M8 0h8v16H0z" fill="#fff"/><path d="M1 5h4v4H1zM5 2h5v4H5z" fill="#29c4a4" stroke="#fff"/><path d="M11 1v6l3-3" stroke="#000" fill="none"/><rect x="11" y="10" width="3" height="4" fill="#c11"/></svg><svg><use href="#hand"/></svg></div>
    <svg class="ml-[118px] h-4 w-[11px]" viewBox="0 0 11 16"><rect width="11" height="16" fill="#ccc" stroke="#222"/><path d="M2 3h7" stroke="#252" stroke-width="2"/><path d="M2 7h7M2 10h7M2 13h7" stroke="#111" stroke-width="2" stroke-dasharray="2 1"/></svg>
    <label class="ml-[33px] flex items-center gap-1.5"><input type="checkbox" class="h-[13px] w-[13px] appearance-none border border-[#999] bg-[#eee]">Conferido</label>
    <button class="ml-[104px] flex items-center gap-2">Verifica Marcação <svg class="h-4 w-4 text-[#223]"><use href="#book"/></svg></button>
    <span class="ml-auto mr-3 text-[12px]">Prioridade</span>
    <div class="mr-1.5 flex gap-[5px] [&_svg]:h-4 [&_svg]:w-4"><svg><use href="#help"/></svg><svg><use href="#cal"/></svg><svg viewBox="0 0 16 16"><path d="M3 1h11v11H3z" fill="#fff" stroke="#000"/><path d="M1 4h8l2 2v6l3 3H8L2 11z" fill="#ffee9a" stroke="#000"/><path d="M4 7h5M4 9h5" stroke="#000"/></svg><svg><use href="#help"/><path d="M1 16v-4h4M15 16v-4h-4" stroke="#ccc" fill="none"/></svg></div>
  </div>

  <form class="flex h-[157px] border-b border-[#888] bg-white [&_label]:whitespace-nowrap [&_input.f]:h-[22px] [&_input.f]:border [&_input.f]:border-[#666] [&_input.f]:px-0.5 [&_input.f]:font-bold [&_.cb]:flex [&_.cb]:h-[22px] [&_.cb]:border [&_.cb]:border-[#666] [&_select]:min-w-0 [&_select]:flex-1 [&_select]:appearance-none [&_select]:pl-0.5 [&_select]:font-bold [&_.cb>i]:m-px [&_.cb>i]:w-4 [&_.cb>i]:border [&_.cb>i]:border-[#999] [&_.cb>i]:bg-[#e4e4e4] [&_.cb>i]:text-center [&_.cb>i]:text-[8px] [&_.cb>i]:not-italic [&_.cb>i]:leading-4 [&_button]:flex [&_button]:h-5 [&_button]:items-center [&_button]:justify-center [&_button]:rounded-sm [&_button]:border [&_button]:border-[#bbb] [&_button]:bg-[#f0f0f0] [&_button]:text-[#999] [&_button_svg]:h-4 [&_button_svg]:w-4">
    <div class="flex-1 pt-[3px]">
      <div class="flex gap-0.5">
        <div class="flex w-[462px] flex-col gap-px [&>div]:flex [&>div]:items-center [&>div>label.l]:w-[62px] [&>div>label.l]:text-right">
          <div><label class="l" for="conv">Convênio</label><input id="conv" value="168" class="f ml-0.5 w-[65px] text-right"><div class="cb ml-0.5 flex-1"><select aria-label="Nome do convênio" class="text-[12px]"><option>COLABORADORES /FUNCIONARIOS/DEPENDENTES</option></select><i>▼</i></div></div>
          <div><label class="l" for="pac">Paciente</label><input id="pac" value="75087" class="f ml-0.5 w-[77px] text-right"><button type="button" aria-label="Procurar paciente" class="ml-0.5 w-5"><svg><use href="#bino"/></svg></button><button type="button" aria-label="Novo" class="ml-1 w-5"><svg viewBox="0 0 16 16"><path d="M3 1h7l3 3v11H3z" fill="#fff" stroke="#aaa"/></svg></button><button type="button" aria-label="Prontuário" class="ml-[3px] w-5"><svg viewBox="0 0 16 16"><path d="M2 2h9v11H2z" fill="#fff" stroke="#000"/><path d="M2 2h10M4 5h5M4 7h5M4 9h5" stroke="#000" stroke-dasharray="2 1"/><path d="M11 3q4 0 3 6l-3 6-4-1" stroke="#134" fill="none" stroke-width="1.500"/></svg></button><button type="button" aria-label="Imprimir" class="ml-0.5 w-5"><svg><use href="#printred"/></svg></button><span class="ml-[3px] text-[#000080]">GAEL ROCHA MATOS</span></div>
          <div><label class="l" for="mat">Mat/CNS</label><input id="mat" value="30805768426" class="f ml-0.5 w-[180px] bg-[#ffffd8]"><button type="button" aria-label="Web" class="ml-0.5 w-[18px]"><svg viewBox="0 0 16 16"><circle cx="8" cy="8" r="7" fill="#1a2a9c" stroke="#000"/><path d="M3 5q4-4 6-1t-3 4zM9 9l4-3v5l-3 3z" fill="#a89a20"/></svg></button><label for="val" class="ml-[5px]">Val. Cart</label><input id="val" class="f ml-0.5 w-[89px]"><button type="button" aria-label="Limpar" class="ml-px w-[21px]"><svg><use href="#trash"/></svg></button></div>
        </div>
        <div class="flex flex-col gap-px [&>div]:flex [&>div]:items-center [&>div>label.l]:w-[30px] [&>div>label.l]:text-right">
          <div><label class="l" for="tipo">Tipo</label><div class="cb ml-0.5 w-[121px]"><select id="tipo"><option>Ambulatório</option></select><i>▼</i></div><label for="plano" class="ml-1 w-[34px]">Plano</label><div class="cb ml-[3px] w-[204px] bg-[#ffffd8]"><select id="plano"><option></option></select><i>▼</i></div></div>
          <div><label class="l" for="data1">Data</label><input id="data1" value="11/01/2021" class="f ml-0.5 w-[89px]"><label for="hora" class="ml-px">Hora</label><input id="hora" value="08:32" class="f ml-0.5 w-[42px]"></div>
          <div><label class="l" for="guia">Guia</label><input id="guia" class="f ml-0.5 w-[143px]"><label for="orig" class="ml-[50px]">Orig.</label><div class="cb ml-px w-[146px]"><select id="orig"><option></option></select><i>▼</i></div></div>
        </div>
      </div>
      <div class="flex">
        <fieldset class="h-[85px] w-[384px] rounded border border-[#d5dfe5] px-[3px] [&>div]:flex [&>div]:items-center">
          <legend class="ml-1 h-3.5 px-px leading-3.5 font-bold">Dados do Solicitante (Se houver)</legend>
          <div><label for="data2" class="w-[29px]">Data</label><input id="data2" value="11/01/2021" class="f ml-0.5 w-[101px] bg-[#ffffd8]"><label for="rcp" class="ml-px">RCP</label><div class="ml-0.5 flex h-[22px] flex-1 border border-[#ddd]"><select id="rcp"><option>01</option></select><span class="w-3.5 text-[8px] leading-5">▼</span></div><input aria-label="UF" value="BA" class="f w-[31px]"><input aria-label="Número do conselho" value="15759" class="f ml-0.5 w-[68px] bg-[#ffffd8]"></div>
          <div class="mt-0.5"><label for="cnpj" class="w-[82px] text-right">CNPJ/CPF</label><input id="cnpj" class="f ml-0.5 w-48"></div>
          <div class="mt-0.5"><label for="esp1" class="w-[82px] text-right">Especialidade</label><div class="cb ml-0.5 flex-1"><select id="esp1"><option>Otorrinolaringologia</option></select><i>▼</i></div></div>
        </fieldset>
        <div class="ml-0.5 flex w-[434px] flex-col gap-px pt-[17px] [&>div]:flex [&>div]:items-center [&>div>label.l]:w-[107px] [&>div>label.l]:text-right">
          <div><label class="l" for="prof">Prof. Responsável</label><input id="prof" value="17" class="f ml-[3px] w-[51px] text-right"><div class="cb ml-0.5 flex-1"><select aria-label="Nome do profissional"><option>ANNA CLARA MOTA DUQUE</option></select><i>▼</i></div><button type="button" aria-label="Procurar profissional" class="ml-px w-5"><svg><use href="#bino"/></svg></button></div>
          <div><svg class="ml-1 h-4 w-4" viewBox="0 0 16 16"><path d="M2 13l2-6 5-5 3 3-6 6zM7 9h5M9 5l4-3" stroke="#999" fill="#fff"/></svg><label for="esp2" class="w-[87px] text-right">Especialidade</label><div class="cb ml-[3px] flex-1 bg-[#ffffd8]"><select id="esp2"><option>Fonoaudiologia</option></select><i>▼</i></div></div>
          <div><label class="l" for="cod">Código Principal</label><input id="cod" value="40.10.346-3" class="f ml-[3px] w-[143px] bg-[#ffffd8]"><button type="button" aria-label="Procurar código" class="ml-1.5 w-[21px]"><svg><use href="#bino"/></svg></button><label for="cid" class="ml-auto">CID</label><input id="cid" class="f ml-[3px] w-[53px]"><button type="button" aria-label="Procurar CID" class="ml-[3px] w-[21px]"><svg><use href="#bino"/></svg></button><button type="button" aria-label="Configurar" class="ml-1 w-[21px]"><svg viewBox="0 0 16 16" fill="none" stroke="#999"><circle cx="8" cy="8" r="6.500" stroke-width="2" stroke-dasharray="3 1"/><circle cx="8" cy="8" r="3.500" stroke-width="2"/></svg></button></div>
        </div>
        <fieldset class="mt-2 ml-1 h-[77px] w-[146px] rounded border border-[#d5dfe5] px-[7px] text-[12px] font-bold [&_input]:h-3 [&_input]:w-3 [&_input]:appearance-none [&_input]:rounded-full [&_input]:border [&_input]:border-[#999] [&_input]:bg-[#e8e8e8] [&_input:checked]:border-2 [&_input:checked]:border-[#8aa] [&_input:checked]:bg-[#0d4f86] [&_label]:flex [&_label]:h-[19px] [&_label]:items-center [&_label]:gap-[3px]">
          <legend class="mb-0.5 h-3.5 px-px leading-3.5">Sintomático Covid-19</legend>
          <label><input type="radio" name="covid">Sim</label>
          <label><input type="radio" name="covid" checked>Não</label>
          <label><input type="radio" name="covid">Covid-19 Confirmado</label>
        </fieldset>
        <svg class="mt-[25px] ml-[14px] h-[42px] w-[42px]" viewBox="0 0 42 42"><circle cx="21" cy="21" r="17" fill="none" stroke="#6a9a4a" stroke-width="7" stroke-dasharray="1.200 1.800"/><circle cx="21" cy="21" r="15" fill="#7fae4e"/><circle cx="21" cy="21" r="12" fill="none" stroke="#a8cc80" stroke-width="2" stroke-dasharray="2 2"/><path d="M12 14q5-4 10-1v10q-3 6-6 6-5-5-4-15z" fill="#c83a3a" stroke="#822"/><path d="M16 17l2 2M19 22l1 2M15 24l2-1" stroke="#722"/></svg>
      </div>
    </div>
    <svg class="h-full w-[185px]" viewBox="0 0 185 157" preserveAspectRatio="none" role="img" aria-label="Foto do paciente"><rect width="185" height="157" fill="#c3cce0"/><path d="M1 157q4-12 20-17l30-10q12-3 14-9V108q-5-6-7-16l-2-8q-1-6 3-8V60q0-12 8-17 10-5 25-6h16l-2 3q20 4 20 18v18q3 2 2 8l-2 10q-2 9-8 14v13q2 6 14 9l30 10q18 5 22 15v2z" fill="#fff"/><text x="91" y="93" text-anchor="middle" font-size="34" font-weight="bold" font-family="DejaVu Sans" fill="#1a1a8c">?</text></svg>
  </form>

  <div class="flex h-[351px] border-l border-[#99a] pt-1.5 pr-1">
    <div class="flex w-[47px] flex-col pl-[5px] font-bold" role="tablist">
      <button role="tab" aria-selected="true" class="flex h-[106px] items-center justify-center border-b border-[#666] bg-[#3399ff] text-white"><span class="rotate-180 whitespace-nowrap font-['DejaVu_Sans',sans-serif] text-[11px] [writing-mode:vertical-rl]">Honor. e Taxas</span></button>
      <button role="tab" aria-selected="false" class="flex h-[67px] items-center justify-center border-b border-[#666]"><span class="rotate-180 whitespace-nowrap font-['DejaVu_Sans',sans-serif] text-[11px] [writing-mode:vertical-rl]">Mat/Med.</span></button>
    </div>
    <div class="relative flex min-w-0 flex-1 flex-col border-b-2 border-[#999]">
      <div class="mt-px mb-[3px] mr-[3px] flex flex-1 flex-col overflow-hidden border-2 border-l border-[#666] bg-white">
        <table class="w-full table-fixed border-collapse text-[12px] font-bold [&_th]:bg-[#004080] [&_th]:p-0 [&_th]:pl-0.5 [&_th]:text-left [&_th]:text-[13px] [&_th]:leading-[20px] [&_th]:whitespace-nowrap [&_th]:text-white [&_td]:overflow-hidden [&_td]:whitespace-nowrap [&_td]:border-r [&_td]:border-[#b0bccc] [&_td]:bg-[#e0eeff] [&_td]:p-0 [&_td]:px-[3px] [&_td]:leading-[18px] [&_td]:italic">
          <colgroup><col class="w-3"><col class="w-[89px]"><col class="w-[299px]"><col class="w-[60px]"><col class="w-[130px]"><col class="w-[49px]"><col class="w-[69px]"><col class="w-[57px]"><col class="w-11"><col class="w-[58px]"><col class="w-[55px]"><col class="w-[75px]"><col class="w-14"><col class="w-[102px]"><col class="w-[86px]"><col></colgroup>
          <thead><tr><th></th><th>Codigo</th><th>Descrição Proced/Taxa</th><th>Prof.</th><th>Nome Profissional</th><th>Quant.</th><th class="pr-[3px]! text-right!">Valor</th><th>Cobrar?</th><th>Esp.</th><th>Gr. Part.</th><th>Técnica</th><th>MNM</th><th>CID</th><th>Fornecedor</th><th>Nota fiscal</th><th>Orden</th></tr></thead>
          <tbody><tr><td class="bg-[#004080]!"></td><td></td><td class="border! border-dotted! border-black! bg-[#3399ff]! leading-4! text-white">OTOEMISSOES EVOCADAS TRANSIENTES</td><td class="text-right">17</td><td>ANNA CLARA MOTA</td><td class="text-right">1</td><td class="text-right">100,00</td><td>N</td><td></td><td>11</td><td>C</td><td></td><td></td><td></td><td></td><td></td></tr></tbody>
        </table>
        <div class="mt-auto flex h-4 items-center bg-[#ececec] px-1.5 text-[7px]"><span>◀</span><span class="ml-1.5 h-[15px] w-3.5 border border-[#aaa] bg-[linear-gradient(#f4f4f4,#d0d0d0)]"></span><span class="ml-auto">▶</span></div>
      </div>
      <div role="tooltip" class="absolute top-4 left-0 h-5 w-[109px] border border-[#777] bg-[linear-gradient(#fff,#e8e8f2)] text-center font-['Noto_Sans',sans-serif] text-[11px] leading-[18px] whitespace-nowrap shadow">Conta Amb/Emerg.</div>
    </div>
    <div class="flex w-[25px] flex-col items-center gap-[11px] border-r border-b border-l border-[#888] pt-1 [&_button]:h-4 [&_svg]:h-4 [&_svg]:w-4">
      <button aria-label="Novo item"><svg viewBox="0 0 16 16"><circle cx="8" cy="8" r="4" fill="#ffe820"/><path d="M8 0v3M8 13v3M0 8h3M13 8h3M2 2l2 2M12 12l2 2M14 2l-2 2M2 14l2-2" stroke="#554" stroke-width="1.200"/></svg></button>
      <button aria-label="Copiar itens"><svg><use href="#docs"/></svg></button>
      <button aria-label="Excluir item"><svg class="text-[#222]"><use href="#trash"/></svg></button>
      <button aria-label="Ajuda"><svg><use href="#help"/></svg></button>
      <button aria-label="Livro"><svg class="text-[#224]"><use href="#book"/></svg></button>
      <button aria-label="Pacotes"><svg><use href="#shapes"/></svg></button>
      <button aria-label="Calendário"><svg><use href="#cal"/></svg></button>
      <button aria-label="Monitor 1"><svg><use href="#pc"/></svg></button>
      <button aria-label="Monitor 2"><svg><use href="#pc"/></svg></button>
      <button aria-label="Imprimir itens"><svg><use href="#printred"/></svg></button>
    </div>
  </div>

  <div class="flex h-[34px] items-start font-bold [&_button+button]:mt-0.5 [&_button+button]:h-[30px] [&_button+button]:border [&_button+button]:border-b-0 [&_button+button]:border-[#8c8c8c] [&_button+button]:bg-[linear-gradient(#f2f2f2,#d4d4d4)] [&_button]:whitespace-nowrap" role="tablist">
    <button role="tab" aria-selected="true" class="h-[34px] w-[71px] border-t border-[#8c8c8c] bg-white font-normal">Conta-F7</button>
    <button role="tab" class="w-[153px]">Outras Informações-F8</button><button role="tab" class="w-[127px]">Autoriz./Solic.-F11</button><button role="tab" class="w-[78px]">Prontuário</button><button role="tab" class="w-20">Todos CPS</button><button role="tab" class="w-12 pr-2">Lista</button><button role="tab" class="w-[60px]">Exames</button>
  </div>

  <div class="flex h-[41px] items-start bg-[#000080] pt-0.5 pl-2.5 font-bold text-white [&_input]:block [&_input]:h-[22px] [&_input]:w-full [&_input]:border [&_input]:border-[#777] [&_input]:bg-white [&_input]:px-0.5 [&_input]:text-right [&_input]:text-[12px] [&_input]:text-black [&_label]:block [&_label]:whitespace-nowrap [&_label]:leading-3.5">
    <label class="w-[99px]">Honorários<input value="0,00"></label>
    <label class="ml-[5px] w-[99px]">Mat/Med<input value="0,00"></label>
    <label class="ml-[7px] w-[100px]">Desc. no Total<input value="0,00"></label>
    <label class="ml-1.5 w-[135px]">Desc. nos Itens/Glosa<input value="0,00"></label>
    <label class="ml-[5px] w-[103px]">Valor Líquido*<input value="0,00"></label>
    <span class="ml-1.5 self-end pb-0.5 font-normal">* Valor liquido s/ Desconto nos itens</span>
  </div>

  <div class="flex h-14 items-start pl-[7px] text-[11px] [&_.b]:flex [&_.b]:gap-0.5 [&_.g]:pt-px [&_p]:h-[15px] [&_p]:leading-[15px] [&_button]:flex [&_button]:h-[38px] [&_button]:items-center [&_button]:justify-center [&_button]:rounded-sm [&_button]:border [&_button]:border-[#777] [&_button]:bg-[linear-gradient(#f4f4f4,#d0d0d0)] [&_button]:whitespace-nowrap [&_.b_svg]:h-[30px] [&_.b_svg]:w-[30px] [&>i]:h-[54px] [&>i]:w-px [&>i]:bg-[#aaa]">
    <div class="g"><p class="text-sm font-bold text-[#000080]">Navegando...</p><div class="b gap-[3px]! [&_button]:w-[39px]">
      <button aria-label="Primeiro"><svg viewBox="0 0 32 32"><use href="#navprev"/><path d="M6 5v22" stroke="#07a030" stroke-width="2"/></svg></button><button aria-label="Anterior"><svg><use href="#navprev"/></svg></button><button aria-label="Próximo"><svg><use href="#navnext"/></svg></button><button aria-label="Último"><svg viewBox="0 0 32 32"><use href="#navnext"/><path d="M28 5v22" stroke="#07a030" stroke-width="2"/></svg></button></div></div>
    <i class="ml-[5px]"></i>
    <div class="g ml-1.5"><p>Ação</p><div class="b [&_button]:w-[39px]">
      <button aria-label="Incluir"><svg viewBox="0 0 32 32"><path d="M14 8l6 4 3-8 7 2v10l-10 5-8-4z" fill="#f8c030" stroke="#a06a10"/><path d="M6 8q10-4 8 6l-2 7-5-2q3-6-1-11z" fill="#2a60c8"/><path d="M3 20l8-3 6 6-5 7-9-2z" fill="#cfeaf4" stroke="#6aa"/></svg></button>
      <button aria-label="Alterar"><svg viewBox="0 0 32 32"><path d="M12 26h14l-4 3H10z" fill="#999"/><path d="M8 28l2-9L18 5l8 4-9 15z" fill="#f0a020" stroke="#643"/><path d="M18 6l2-3q5 0 7 4l-1 3z" fill="#d05060"/><path d="M8 28l1-5 4 3z" fill="#333"/><path d="M12 20l9-13" stroke="#fde080" stroke-width="2"/></svg></button>
      <button aria-label="Excluir"><svg viewBox="0 0 32 32"><path d="M6 8l9-6 8 3 4 5-3 3H7z" fill="#fff070" stroke="#000"/><ellipse cx="16" cy="12" rx="12" ry="3.500" fill="none" stroke="#000" stroke-width="1.500"/><path d="M4 13l4 16q8 3 16 0l4-16" fill="#ffffc0" stroke="#000" stroke-width="1.500"/><path d="M8 15l14 14M14 15l10 10M20 15l5 5M24 15L10 29M18 15L8 25M12 15l-5 5" stroke="#000"/></svg></button></div></div>
    <i class="ml-1.5"></i>
    <div class="g ml-[5px]"><p>Confirmação</p><div class="b [&_button]:w-[39px] [&_button]:border-[#bbb]!">
      <button aria-label="Salvar"><svg viewBox="0 0 32 32"><path d="M2 3h28v27H5l-3-3z" fill="#555" stroke="#111"/><rect x="8" y="3" width="16" height="13" fill="#ddd"/><rect x="8" y="20" width="16" height="10" fill="#111"/><rect x="17" y="22" width="4" height="7" fill="#eee"/></svg></button>
      <button aria-label="Cancelar"><svg viewBox="0 0 32 32"><path d="M10 1h12l9 9v12l-9 9H10l-9-9V10z" fill="#555" stroke="#222"/><path d="M11 19V9M14 18V6M18 18V6M21 19V9" stroke="#ddd" stroke-width="2.500" stroke-linecap="round"/><path d="M10 16h12.500v5q0 7-6 7-5 0-7-6l-3-5q1-3 3.500 1z" fill="#ddd"/></svg></button></div></div>
    <i class="ml-[3px]"></i>
    <div class="g ml-1.5"><label class="flex h-[15px] items-center gap-1"><input type="checkbox" class="h-3 w-3 appearance-none border border-[#999] bg-white">Enviar para Impressora</label><div class="flex [&_button]:flex-col [&_button]:leading-3 [&_svg]:h-6 [&_svg]:w-7">
      <button class="w-[107px]"><svg><use href="#bigprint"/></svg>Ficha de Atendimento</button><button class="ml-1 w-[94px]"><svg><use href="#bigprint"/></svg>Conta Médica II</button><button class="ml-1 w-[55px]">Termo</button><button class="ml-[3px] w-[50px]">Exames</button></div></div>
    <div class="ml-auto flex gap-[3px] pt-px pr-px [&_button]:h-[53px]!"><button class="w-[105px]">Guia de Autorização</button><button class="w-[75px]">Cancela Guia</button></div>
  </div>

  <footer class="flex h-5 items-center justify-between border border-[#999] border-r-0 bg-[#d4f3fb] px-[3px] pl-px font-['Liberation_Serif',serif] text-[12px]"><span>Usuário:125 TESSA MAGALLI DE SANT ANA BENEVIDES</span><span>CopyRight© Antonio Ribeiro dos Santos Jr. - Versão: 2.0.4.65</span></footer>
</section>
</div>
</body>
</html>
